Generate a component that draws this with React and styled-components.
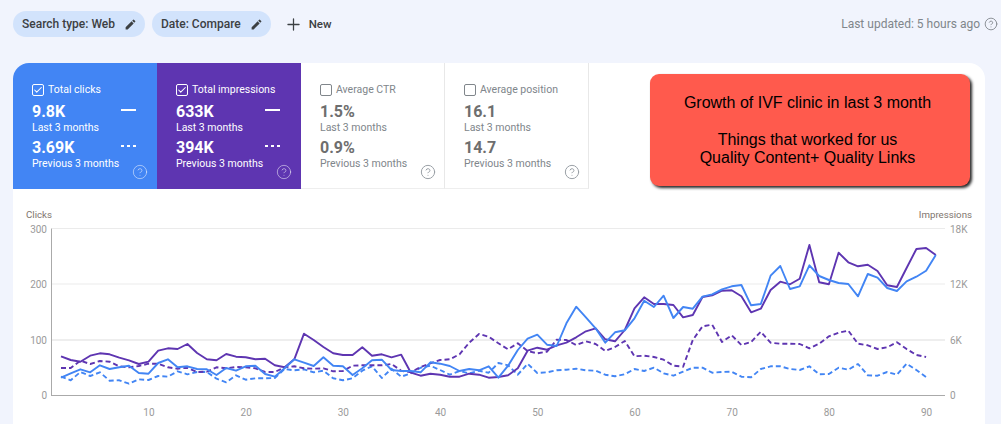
import React from "react";
import styled, { createGlobalStyle } from "styled-components";
import { Check, CircleHelp, Plus } from "lucide-react";

// y values are read off the chart, 3x zoomed; converted to pixels in toPath
const PURPLE = [469, 480, 485, 467, 460, 463, 473, 481, 492, 485, 452, 445, 447, 432, 459, 478, 481, 462, 470, 472, 478, 476, 496, 502, 478, 401, 420, 441, 460, 465, 465, 442, 467, 463, 472, 464, 518, 527, 521, 524, 530, 530, 521, 524, 533, 531, 526, 505, 452, 443, 449, 436, 428, 412, 394, 385, 418, 424, 390, 325, 292, 312, 312, 315, 352, 345, 291, 286, 272, 271, 289, 337, 326, 270, 245, 253, 236, 135, 247, 253, 158, 187, 199, 194, 213, 256, 261, 204, 147, 144, 165];
const BLUE = [533, 520, 508, 517, 496, 507, 502, 497, 519, 521, 489, 478, 502, 499, 507, 508, 525, 504, 512, 499, 497, 522, 530, 505, 478, 488, 498, 472, 497, 499, 525, 505, 481, 479, 510, 513, 513, 517, 487, 491, 498, 513, 507, 511, 499, 533, 497, 450, 416, 404, 434, 438, 370, 320, 352, 385, 428, 397, 391, 355, 302, 321, 287, 354, 321, 326, 290, 283, 268, 259, 255, 316, 312, 227, 198, 267, 259, 196, 228, 240, 249, 252, 289, 222, 233, 264, 273, 244, 230, 212, 165];
const PURPLE_PREV = [504, 504, 482, 492, 483, 485, 499, 502, 498, 491, 491, 502, 506, 503, 516, 515, 502, 505, 501, 502, 505, 516, 516, 502, 499, 505, 506, 505, 514, 513, 497, 496, 496, 496, 492, 512, 517, 501, 490, 480, 478, 463, 428, 402, 410, 430, 448, 430, 453, 460, 455, 419, 420, 435, 424, 432, 453, 441, 423, 469, 467, 471, 479, 497, 500, 420, 379, 374, 426, 406, 435, 426, 395, 428, 431, 431, 432, 445, 431, 409, 398, 392, 431, 436, 447, 442, 427, 447, 465, 471];
const BLUE_PREV = [530, 541, 516, 528, 517, 542, 541, 551, 538, 540, 528, 530, 514, 523, 516, 516, 536, 547, 526, 539, 535, 535, 534, 507, 511, 508, 517, 512, 535, 541, 535, 512, 499, 534, 506, 530, 520, 503, 497, 510, 524, 513, 520, 512, 518, 489, 496, 524, 491, 519, 517, 511, 509, 506, 511, 512, 524, 529, 523, 507, 513, 503, 520, 527, 515, 503, 503, 518, 516, 515, 530, 532, 507, 499, 499, 507, 510, 499, 523, 522, 503, 509, 492, 526, 527, 516, 524, 491, 510, 531];

const CHART_TOP = 222; // page y where the svg starts
const toPath = (values) =>
    values
        .map((z, i) => `${i === 0 ? "M" : "L"}${(61 + 9.72 * i - 13).toFixed(1)} ${(200 + z / 3 - CHART_TOP).toFixed(1)}`)
        .join(" ");

const GRID = [
    { y: 6.5, left: "300", right: "18K" },
    { y: 62, left: "200", right: "12K" },
    { y: 118, left: "100", right: "6K", thick: true },
];
const DAYS = [10, 20, 30, 40, 50, 60, 70, 80, 90];

const METRICS = [
    { label: "Total clicks", now: "9.8K", prev: "3.69K", color: "#4285f4", checked: true },
    { label: "Total impressions", now: "633K", prev: "394K", color: "#5e35b1", checked: true },
    { label: "Average CTR", now: "1.5%", prev: "0.9%" },
    { label: "Average position", now: "16.1", prev: "14.7" },
];

const PencilIcon = () => (
    <svg width="13" height="13" viewBox="0 0 24 24" fill="#3c4043">
        <path d="M3 17.25V21h3.75L17.81 9.94l-3.75-3.75L3 17.25zM20.71 7.04a1 1 0 0 0 0-1.41l-2.34-2.34a1 1 0 0 0-1.41 0l-1.83 1.83 3.75 3.75 1.83-1.83z" />
    </svg>
);

const Tile = ({ label, now, prev, color, checked }) => (
    <TileBox $color={color}>
        <TileLabel $active={checked}>
            <CheckBox $active={checked}>{checked && <Check size={10} strokeWidth={2.5} />}</CheckBox>
            {label}
        </TileLabel>
        <ValueRow>
            <Value $active={checked}>{now}</Value>
            {checked && <SolidLegend />}
        </ValueRow>
        <Period $active={checked}>Last 3 months</Period>
        <ValueRow $second>
            <Value $active={checked}>{prev}</Value>
            {checked && <DashLegend />}
        </ValueRow>
        <Period $active={checked}>Previous 3 months</Period>
        <TileHelp $active={checked}>
            <CircleHelp size={16} strokeWidth={1.5} />
        </TileHelp>
    </TileBox>
);

const App = () => {
    return (
        <>
            <GlobalStyle />
            <Page>
                <Toolbar>
                    <Chip>
                        Search type: Web <PencilIcon />
                    </Chip>
                    <Chip>
                        Date: Compare <PencilIcon />
                    </Chip>
                    <NewButton>
                        <Plus size={19} strokeWidth={1.6} />
                        New
                    </NewButton>
                    <Updated>
                        Last updated: 5 hours ago
                        <CircleHelp size={14} strokeWidth={1.5} />
                    </Updated>
                </Toolbar>
                <Card>
                    <Tiles>
                        {METRICS.map((m) => (
                            <Tile key={m.label} {...m} />
                        ))}
                    </Tiles>
                    <Callout>
                        <p>Growth of IVF clinic in last 3 month</p>
                        <p>
                            Things that worked for us
                            <br />
                            Quality Content+ Quality Links
                        </p>
                    </Callout>
                    <ChartHead>
                        <span>Clicks</span>
                        <span>Impressions</span>
                    </ChartHead>
                    <svg width="972" height="204" style={{ display: "block" }}>
                        {GRID.map((g) => (
                            <g key={g.left}>
                                <line x1="39" x2="932" y1={g.y} y2={g.y} stroke={g.thick ? "#eeeeee" : "#ebebeb"} strokeWidth={g.thick ? 2 : 1} />
                                <AxisText x="34" y={g.y + 4} textAnchor="end">{g.left}</AxisText>
                                <AxisText x="937" y={g.y + 4}>{g.right}</AxisText>
                            </g>
                        ))}
                        <line x1="39" x2="932" y1="173.5" y2="173.5" stroke="#aaaaaa" />
                        <line x1="38.5" x2="38.5" y1="6.5" y2="174" stroke="#aaaaaa" />
                        <AxisText x="34" y="177" textAnchor="end">0</AxisText>
                        <AxisText x="937" y="177">0</AxisText>
                        {DAYS.map((d) => (
                            <AxisText key={d} x={48 + 9.72 * (d - 1) + 0.5} y="193.5" textAnchor="middle">{d}</AxisText>
                        ))}
                        <Series d={toPath(BLUE_PREV)} stroke="#4285f4" $dashed />
                        <Series d={toPath(PURPLE_PREV)} stroke="#5e35b1" $dashed />
                        <Series d={toPath(PURPLE)} stroke="#5e35b1" />
                        <Series d={toPath(BLUE)} stroke="#4285f4" />
                    </svg>
                </Card>
            </Page>
        </>
    );
};

export default App;

const GlobalStyle = createGlobalStyle`
    html, body {
        margin: 0;
        padding: 0;
        overflow: hidden;
    }
    body {
        font-family: Roboto, "Liberation Sans", sans-serif;
    }
`;

const Page = styled.div`
    box-sizing: border-box;
    width: 1001px;
    height: 424px;
    overflow: hidden;
    padding: 11px 16px 0 13px;
    background: #f1f4fd;
`;

const Toolbar = styled.div`
    display: flex;
    align-items: center;
    gap: 7px;
    height: 26px;
    margin-bottom: 26px;
`;

const Chip = styled.div`
    display: flex;
    align-items: center;
    gap: 9px;
    height: 26px;
    padding: 0 8px 0 9px;
    border-radius: 13px;
    background: #d2e3fc;
    color: #3c4043;
    font-size: 12px;
    font-weight: 500;
`;

const NewButton = styled.div`
    display: flex;
    align-items: center;
    gap: 6px;
    margin-left: 6px;
    color: #3c4043;
    font-size: 11.5px;
    font-weight: 500;
`;

const Updated = styled.div`
    display: flex;
    align-items: center;
    gap: 4px;
    margin-left: auto;
    margin-right: -13px;
    color: #80868b;
    font-size: 12px;
`;

const Card = styled.div`
    position: relative;
    background: #fff;
    border-radius: 16px 16px 0 0;
    height: 380px;
    overflow: hidden;
`;

const Tiles = styled.div`
    display: flex;
    height: 126px;
`;

const TileBox = styled.div`
    position: relative;
    box-sizing: border-box;
    width: 144px;
    padding: 20px 20px 0 19px;
    background: ${(p) => p.$color || "#fff"};
    border-right: 1px solid ${(p) => (p.$color ? "transparent" : "#e8e8e8")};
    border-bottom: 1px solid ${(p) => (p.$color ? "transparent" : "#eeeeee")};
`;

const TileLabel = styled.div`
    display: flex;
    align-items: center;
    gap: 4px;
    height: 13px;
    color: ${(p) => (p.$active ? "#fff" : "#80868b")};
    font-size: 10.5px;
    white-space: nowrap;
`;

const CheckBox = styled.span`
    box-sizing: border-box;
    display: flex;
    align-items: center;
    justify-content: center;
    width: 12px;
    height: 12px;
    border: 1px solid ${(p) => (p.$active ? "#fff" : "#80868b")};
    border-radius: 2px;
    color: #fff;
`;

const ValueRow = styled.div`
    display: flex;
    align-items: center;
    justify-content: space-between;
    height: 20px;
    margin-top: ${(p) => (p.$second ? "3px" : "5px")};
`;

const Value = styled.div`
    color: ${(p) => (p.$active ? "#fff" : "#6e6e6e")};
    font-size: 16px;
    font-weight: 700;
`;

const Period = styled.div`
    color: ${(p) => (p.$active ? "#fff" : "#80868b")};
    font-size: 10.5px;
    line-height: 13px;
    white-space: nowrap;
`;

const SolidLegend = styled.span`
    width: 15px;
    height: 2px;
    margin-bottom: 3px;
    background: #fff;
`;

const DashLegend = styled.span`
    width: 15px;
    height: 2px;
    margin-bottom: 3px;
    background: repeating-linear-gradient(to right, #fff 0 3px, transparent 3px 6px);
`;

const TileHelp = styled.span`
    position: absolute;
    right: 8px;
    bottom: 8px;
    display: flex;
    color: ${(p) => (p.$active ? "rgba(255, 255, 255, 0.5)" : "#9aa0a6")};
`;

const Callout = styled.div`
    position: absolute;
    left: 637px;
    top: 11px;
    box-sizing: border-box;
    width: 320px;
    height: 112px;
    padding: 20px 5px 0 0;
    border-radius: 9px;
    background: #ff5a4d;
    box-shadow: 2px 2px 3px rgba(0, 0, 0, 0.85);
    color: #000;
    font-family: "Liberation Sans", Arial, sans-serif;
    font-size: 16px;
    line-height: 18.4px;
    text-align: center;

    p {
        margin: 0 0 18.4px;
    }
`;

const ChartHead = styled.div`
    display: flex;
    justify-content: space-between;
    height: 33px;
    padding: 20px 13px 0 13px;
    box-sizing: border-box;
    color: #80756e;
    font-size: 9.7px;
`;

const AxisText = styled.text`
    fill: #9a9a9a;
    font-size: 10px;
    font-family: Roboto, sans-serif;
`;

const Series = styled.path`
    fill: none;
    stroke-width: 1.9;
    stroke-linejoin: round;
    stroke-dasharray: ${(p) => (p.$dashed ? "5 3" : "none")};
`;
